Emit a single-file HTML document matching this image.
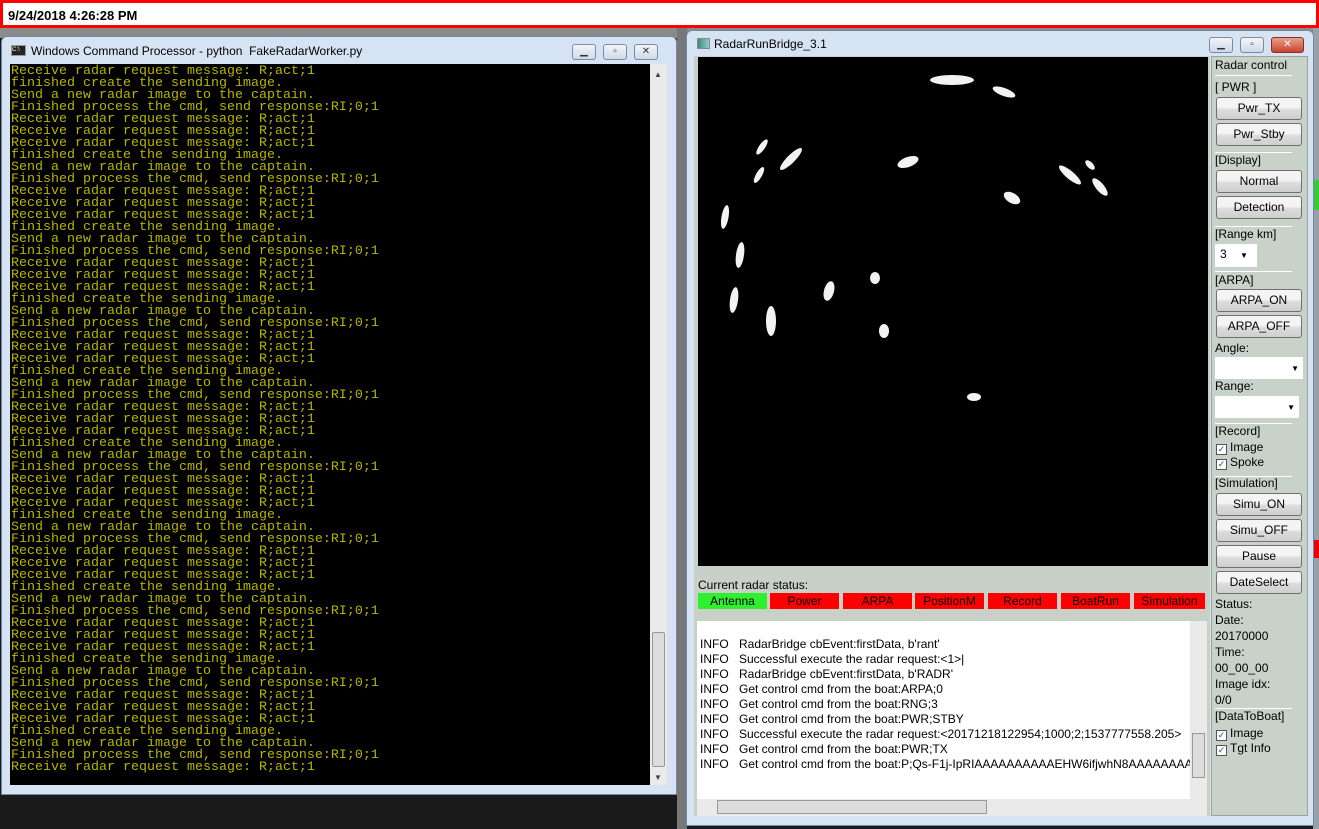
<!DOCTYPE html>
<html><head><meta charset="utf-8"><style>
*{margin:0;padding:0;box-sizing:border-box}
body{width:1319px;height:829px;overflow:hidden;background:#1a1a1a;position:relative;font-family:"Liberation Sans",sans-serif}
.abs{position:absolute}
#top{left:0;top:0;width:1319px;height:28px;border:3px solid #f00;background:#fff;font:bold 13px "Liberation Sans",sans-serif;padding:5px 0 0 5px;color:#000}
.win{background:#d6e3f2;border:1px solid #6f8aa8;border-radius:6px 6px 0 0}
.tb{font-size:12px;color:#000}
.cap{width:24px;height:16px;border:1px solid #7a8ba3;border-radius:3px;background:linear-gradient(#f2f5fa,#cfd9e6);font-size:10px;text-align:center;line-height:14px;color:#333}
#con{left:10px;top:64px;width:640px;height:721px;background:#000;font:13.33px "Liberation Mono",monospace;line-height:12px;color:#b8b400;padding:2px 0 0 1px;white-space:pre;overflow:hidden}
.sb{background:#eaeaea}
.btn{position:absolute;left:1216px;width:86px;height:23px;border:1px solid #707070;border-radius:3px;background:linear-gradient(#f4f4f4 45%,#dcdcdc 55%,#cfcfcf);font-size:12px;text-align:center;line-height:21px}
.lbl{position:absolute;left:1215px;font-size:12px;color:#000}
.hr{position:absolute;left:1215px;width:77px;height:1px;background:#a0a8a0;border-bottom:1px solid #fff}
.cb{position:absolute;left:1216px;font-size:12px}
.cb i{display:inline-block;width:11px;height:11px;border:1px solid #555;background:#fff;vertical-align:-1px;margin-right:3px;font-style:normal;font-size:9px;line-height:9px;text-align:center;color:#2a4b8a}
.st{position:absolute;top:593px;height:16px;font-size:12px;text-align:center;line-height:16px;background:#f00;color:#000}
#log{left:697px;top:621px;width:493px;height:178px;background:#fff;font-size:12px;line-height:15px;padding-top:16px;overflow:hidden;white-space:nowrap}
#log div span{display:inline-block;width:42px;padding-left:3px}
</style></head><body>
<div class="abs" style="left:0;top:28px;width:1319px;height:10px;background:#8a8a8a"></div>
<div class="abs" style="left:677px;top:28px;width:10px;height:801px;background:#777"></div>
<div class="abs" style="left:1313px;top:28px;width:6px;height:801px;background:#9aa0a8"></div>
<div class="abs" style="left:1313px;top:180px;width:6px;height:30px;background:#3c3"></div>
<div class="abs" style="left:1313px;top:540px;width:6px;height:18px;background:#e00"></div>
<div id="top" class="abs">9/24/2018 4:26:28 PM</div>

<div class="abs win" style="left:1px;top:36px;width:676px;height:759px"></div>
<div class="abs" style="left:11px;top:45px;width:15px;height:11px;background:#222;border:1px solid #999;font-size:6px;color:#fff;line-height:9px">C:\</div>
<div class="abs tb" style="left:31px;top:44px">Windows Command Processor - python &nbsp;FakeRadarWorker.py</div>
<div class="abs cap" style="left:572px;top:44px">▁</div>
<div class="abs cap" style="left:603px;top:44px">▫</div>
<div class="abs cap" style="left:634px;top:44px;width:24px">✕</div>
<div id="con" class="abs">Receive radar request message: R;act;1
finished create the sending image.
Send a new radar image to the captain.
Finished process the cmd, send response:RI;0;1
Receive radar request message: R;act;1
Receive radar request message: R;act;1
Receive radar request message: R;act;1
finished create the sending image.
Send a new radar image to the captain.
Finished process the cmd, send response:RI;0;1
Receive radar request message: R;act;1
Receive radar request message: R;act;1
Receive radar request message: R;act;1
finished create the sending image.
Send a new radar image to the captain.
Finished process the cmd, send response:RI;0;1
Receive radar request message: R;act;1
Receive radar request message: R;act;1
Receive radar request message: R;act;1
finished create the sending image.
Send a new radar image to the captain.
Finished process the cmd, send response:RI;0;1
Receive radar request message: R;act;1
Receive radar request message: R;act;1
Receive radar request message: R;act;1
finished create the sending image.
Send a new radar image to the captain.
Finished process the cmd, send response:RI;0;1
Receive radar request message: R;act;1
Receive radar request message: R;act;1
Receive radar request message: R;act;1
finished create the sending image.
Send a new radar image to the captain.
Finished process the cmd, send response:RI;0;1
Receive radar request message: R;act;1
Receive radar request message: R;act;1
Receive radar request message: R;act;1
finished create the sending image.
Send a new radar image to the captain.
Finished process the cmd, send response:RI;0;1
Receive radar request message: R;act;1
Receive radar request message: R;act;1
Receive radar request message: R;act;1
finished create the sending image.
Send a new radar image to the captain.
Finished process the cmd, send response:RI;0;1
Receive radar request message: R;act;1
Receive radar request message: R;act;1
Receive radar request message: R;act;1
finished create the sending image.
Send a new radar image to the captain.
Finished process the cmd, send response:RI;0;1
Receive radar request message: R;act;1
Receive radar request message: R;act;1
Receive radar request message: R;act;1
finished create the sending image.
Send a new radar image to the captain.
Finished process the cmd, send response:RI;0;1
Receive radar request message: R;act;1</div>
<div class="abs sb" style="left:650px;top:64px;width:17px;height:721px"></div>
<div class="abs" style="left:652px;top:632px;width:13px;height:135px;background:#dcdcdc;border:1px solid #999;border-radius:2px"></div>
<div class="abs" style="left:654px;top:70px;font-size:8px;color:#444">▲</div>
<div class="abs" style="left:654px;top:773px;font-size:8px;color:#444">▼</div>

<div class="abs win" style="left:686px;top:30px;width:628px;height:796px"></div>
<div class="abs" style="left:697px;top:38px;width:13px;height:11px;background:linear-gradient(90deg,#3a8a7a,#9cc);border:1px solid #888"></div>
<div class="abs tb" style="left:714px;top:37px">RadarRunBridge_3.1</div>
<div class="abs cap" style="left:1209px;top:37px">▁</div>
<div class="abs cap" style="left:1240px;top:37px">▫</div>
<div class="abs cap" style="left:1271px;top:37px;width:33px;background:linear-gradient(#e8a090,#c8442c);color:#fff;border-color:#8a3020">✕</div>
<div class="abs" style="left:694px;top:56px;width:516px;height:760px;background:#c8d0c8"></div>
<svg class="abs" style="left:698px;top:57px" width="510" height="509">
<rect width="510" height="509" fill="#000"/>
<g fill="#f2f2f2">
<ellipse cx="254" cy="23" rx="22" ry="5"/>
<ellipse cx="306" cy="35" rx="12" ry="4" transform="rotate(20 306 35)"/>
<ellipse cx="64" cy="90" rx="9" ry="3" transform="rotate(-55 64 90)"/>
<ellipse cx="93" cy="102" rx="15" ry="4" transform="rotate(-45 93 102)"/>
<ellipse cx="210" cy="105" rx="11" ry="5" transform="rotate(-20 210 105)"/>
<ellipse cx="61" cy="118" rx="9" ry="3" transform="rotate(-60 61 118)"/>
<ellipse cx="372" cy="118" rx="14" ry="4" transform="rotate(40 372 118)"/>
<ellipse cx="392" cy="108" rx="6" ry="3" transform="rotate(45 392 108)"/>
<ellipse cx="402" cy="130" rx="11" ry="4" transform="rotate(50 402 130)"/>
<ellipse cx="314" cy="141" rx="9" ry="5" transform="rotate(30 314 141)"/>
<ellipse cx="27" cy="160" rx="3.5" ry="12" transform="rotate(10 27 160)"/>
<ellipse cx="42" cy="198" rx="4" ry="13" transform="rotate(8 42 198)"/>
<ellipse cx="177" cy="221" rx="5" ry="6"/>
<ellipse cx="131" cy="234" rx="5" ry="10" transform="rotate(15 131 234)"/>
<ellipse cx="36" cy="243" rx="4" ry="13" transform="rotate(8 36 243)"/>
<ellipse cx="73" cy="264" rx="5" ry="15"/>
<ellipse cx="186" cy="274" rx="5" ry="7"/>
<ellipse cx="276" cy="340" rx="7" ry="4"/>
</g></svg>
<div class="abs" style="left:698px;top:578px;font-size:12px">Current radar status:</div>
<div class="st" style="left:698px;width:69px;background:#2ef02e">Antenna</div>
<div class="st" style="left:770px;width:69px">Power</div>
<div class="st" style="left:843px;width:69px">ARPA</div>
<div class="st" style="left:915px;width:69px">PositionM</div>
<div class="st" style="left:988px;width:69px">Record</div>
<div class="st" style="left:1061px;width:69px">BoatRun</div>
<div class="st" style="left:1134px;width:71px">Simulation</div>
<div id="log" class="abs">
<div><span>INFO</span>RadarBridge cbEvent:firstData, b'rant'</div>
<div><span>INFO</span>Successful execute the radar request:&lt;1&gt;|</div>
<div><span>INFO</span>RadarBridge cbEvent:firstData, b'RADR'</div>
<div><span>INFO</span>Get control cmd from the boat:ARPA;0</div>
<div><span>INFO</span>Get control cmd from the boat:RNG;3</div>
<div><span>INFO</span>Get control cmd from the boat:PWR;STBY</div>
<div><span>INFO</span>Successful execute the radar request:&lt;20171218122954;1000;2;1537777558.205&gt;</div>
<div><span>INFO</span>Get control cmd from the boat:PWR;TX</div>
<div><span>INFO</span>Get control cmd from the boat:P;Qs-F1j-IpRIAAAAAAAAAAEHW6ifjwhN8AAAAAAAA</div>
</div>
<div class="abs sb" style="left:1190px;top:621px;width:17px;height:178px"></div>
<div class="abs" style="left:1192px;top:733px;width:13px;height:45px;background:#dcdcdc;border:1px solid #999"></div>
<div class="abs sb" style="left:697px;top:799px;width:510px;height:17px"></div>
<div class="abs" style="left:717px;top:800px;width:270px;height:14px;background:#dcdcdc;border:1px solid #999"></div>

<div class="abs" style="left:1211px;top:56px;width:97px;height:760px;background:#c8d2c8;border:1px solid #9aa49a"></div>
<div class="lbl" style="top:58px">Radar control</div>
<div class="hr" style="top:75px"></div>
<div class="lbl" style="top:80px">[ PWR ]</div>
<div class="btn" style="top:97px">Pwr_TX</div>
<div class="btn" style="top:123px">Pwr_Stby</div>
<div class="hr" style="top:152px"></div>
<div class="lbl" style="top:153px">[Display]</div>
<div class="btn" style="top:170px">Normal</div>
<div class="btn" style="top:196px">Detection</div>
<div class="hr" style="top:226px"></div>
<div class="lbl" style="top:227px">[Range km]</div>
<div class="abs" style="left:1215px;top:244px;width:42px;height:23px;background:#fff;font-size:12px;padding:3px 0 0 5px">3 <span style="font-size:8px;margin-left:10px">▼</span></div>
<div class="hr" style="top:271px"></div>
<div class="lbl" style="top:273px">[ARPA]</div>
<div class="btn" style="top:289px">ARPA_ON</div>
<div class="btn" style="top:315px">ARPA_OFF</div>
<div class="lbl" style="top:341px">Angle:</div>
<div class="abs" style="left:1215px;top:357px;width:88px;height:22px;background:#fff;font-size:8px;text-align:right;padding:7px 4px 0 0">▼</div>
<div class="lbl" style="top:379px">Range:</div>
<div class="abs" style="left:1215px;top:396px;width:84px;height:22px;background:#fff;font-size:8px;text-align:right;padding:7px 4px 0 0">▼</div>
<div class="hr" style="top:423px"></div>
<div class="lbl" style="top:424px">[Record]</div>
<div class="cb" style="top:440px"><i>✓</i>Image</div>
<div class="cb" style="top:455px"><i>✓</i>Spoke</div>
<div class="hr" style="top:476px"></div>
<div class="lbl" style="top:476px">[Simulation]</div>
<div class="btn" style="top:493px">Simu_ON</div>
<div class="btn" style="top:519px">Simu_OFF</div>
<div class="btn" style="top:545px">Pause</div>
<div class="btn" style="top:571px">DateSelect</div>
<div class="lbl" style="top:597px">Status:</div>
<div class="lbl" style="top:613px">Date:</div>
<div class="lbl" style="top:629px">20170000</div>
<div class="lbl" style="top:645px">Time:</div>
<div class="lbl" style="top:661px">00_00_00</div>
<div class="lbl" style="top:677px">Image idx:</div>
<div class="lbl" style="top:693px">0/0</div>
<div class="hr" style="top:708px"></div>
<div class="lbl" style="top:709px">[DataToBoat]</div>
<div class="cb" style="top:726px"><i>✓</i>Image</div>
<div class="cb" style="top:741px"><i>✓</i>Tgt Info</div>
</body></html>
